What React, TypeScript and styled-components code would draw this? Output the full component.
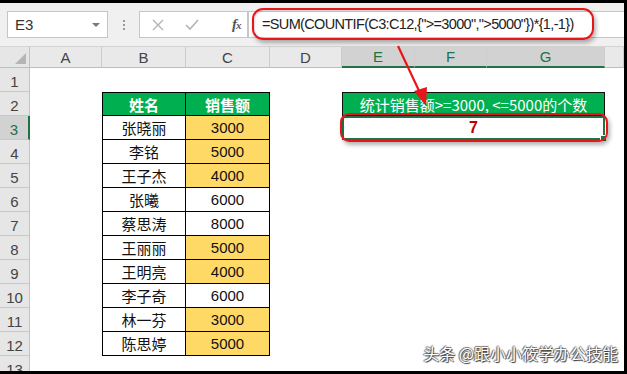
import React from 'react';
import styled, { createGlobalStyle } from 'styled-components';

const Global = createGlobalStyle`
  html, body { margin: 0; padding: 0; background: #fff; }
  body { font-family: "Liberation Sans", "Noto Sans CJK SC", sans-serif; }
`;

const Frame = styled.div`
  position: relative;
  width: 627px;
  height: 374px;
  box-sizing: border-box;
  border-top: 3px solid #000;
  border-right: 3px solid #000;
  border-bottom: 3px solid #000;
  background: #fff;
  display: flex;
  flex-direction: column;
  overflow: hidden;
`;

const Toolbar = styled.div`
  flex: none;
  height: 44px;
  box-sizing: border-box;
  background: #f0f0f0;
  border-bottom: 1px solid #d4d4d4;
  display: flex;
  align-items: flex-start;
  padding: 8px 0 0 7px;
`;

const NameBox = styled.div`
  width: 101px;
  height: 27px;
  box-sizing: border-box;
  background: #fff;
  border: 1px solid #c6c6c6;
  display: flex;
  align-items: center;
  justify-content: space-between;
  padding: 0 7px 0 7px;
  font-size: 15px;
  color: #333;
`;

const Caret = styled.span`
  width: 0;
  height: 0;
  border-left: 4px solid transparent;
  border-right: 4px solid transparent;
  border-top: 4px solid #7a7a7a;
`;

const Grip = styled.div`
  width: 31px;
  height: 27px;
  display: flex;
  flex-direction: column;
  align-items: center;
  justify-content: center;
  gap: 2px;
`;

const Dot = styled.span`
  width: 2px;
  height: 2px;
  background: #9a9a9a;
`;

const FxBox = styled.div`
  width: 109px;
  height: 27px;
  box-sizing: border-box;
  background: #fff;
  border: 1px solid #c6c6c6;
  display: flex;
  align-items: center;
  padding-left: 12px;
  gap: 21px;
`;

const Fx = styled.span`
  margin-left: 12px;
  font-family: "Liberation Serif", serif;
  font-style: italic;
  font-weight: bold;
  font-size: 15px;
  color: #555;
  letter-spacing: -1px;
  & small { font-size: 11px; }
`;

const Formula = styled.div`
  flex: 1;
  height: 27px;
  box-sizing: border-box;
  background: #fff;
  border: 1px solid #c6c6c6;
  border-right: none;
  padding-left: 13px;
  font-size: 14.5px;
  letter-spacing: -0.65px;
  line-height: 25px;
  color: #222;
  white-space: nowrap;
`;

const Sheet = styled.div`
  flex: 1;
  display: grid;
  grid-template-columns: 30px 72px 84px 84px 72px 73px 72px 118px 19px;
  grid-template-rows: 21px repeat(13, 24px);
  overflow: hidden;
`;

const Corner = styled.div`
  position: relative;
  background: #e6e6e6;
  border-right: 1px solid #c2c2c2;
  border-bottom: 1px solid #bdbdbd;
  box-sizing: border-box;
  &::after {
    content: "";
    position: absolute;
    right: 3px;
    bottom: 3px;
    border-left: 11px solid transparent;
    border-bottom: 11px solid #b5b5b5;
  }
`;

const ColHead = styled.div<{ $sel?: boolean }>`
  box-sizing: border-box;
  background: ${p => (p.$sel ? '#d2d2d2' : '#e9e9e9')};
  color: ${p => (p.$sel ? '#217346' : '#444')};
  border-right: 1px solid #cdcdcd;
  border-bottom: ${p => (p.$sel ? '2px solid #217346' : '1px solid #bdbdbd')};
  font-size: 15px;
  display: flex;
  align-items: center;
  justify-content: center;
`;

const RowHead = styled.div<{ $sel?: boolean }>`
  box-sizing: border-box;
  background: ${p => (p.$sel ? '#d2d2d2' : '#e6e6e6')};
  color: ${p => (p.$sel ? '#217346' : '#444')};
  border-right: ${p => (p.$sel ? '2px solid #217346' : '1px solid #c2c2c2')};
  border-bottom: 1px solid #c8c8c8;
  font-size: 15px;
  display: flex;
  align-items: flex-end;
  justify-content: center;
  padding-bottom: 1px;
`;

const Empty = styled.div``;

const TCell = styled.div<{ $head?: boolean; $fill?: boolean; $left?: boolean; $top?: boolean }>`
  box-sizing: border-box;
  background: ${p => (p.$head ? '#00b050' : p.$fill ? '#ffd966' : '#fff')};
  color: ${p => (p.$head ? '#fff' : '#111')};
  font-weight: ${p => (p.$head ? 'bold' : 'normal')};
  font-family: "Noto Sans CJK SC", "Liberation Sans", sans-serif;
  font-size: 15px;
  border-right: 1px solid #000;
  border-bottom: 1px solid #000;
  border-left: ${p => (p.$left ? '1px solid #000' : 'none')};
  border-top: ${p => (p.$top ? '1px solid #000' : 'none')};
  display: flex;
  align-items: center;
  justify-content: center;
  line-height: 1;
`;

const Num = styled.span`
  font-family: "Liberation Sans", sans-serif;
  font-size: 15px;
`;

const StatHead = styled.div`
  grid-column: span 3;
  box-sizing: border-box;
  background: #00b050;
  border: 1px solid #111;
  color: #fff;
  font-family: "Noto Sans CJK SC", sans-serif;
  font-size: 15px;
  display: flex;
  align-items: center;
  justify-content: center;
  line-height: 1;
`;

const Result = styled.div`
  position: relative;
  grid-column: span 3;
  box-sizing: border-box;
  background: #fff;
  border: 2px solid #217346;
  color: #c00000;
  font-weight: bold;
  font-size: 16px;
  display: flex;
  align-items: center;
  justify-content: center;
`;

const Handle = styled.span`
  position: absolute;
  right: -4px;
  bottom: -4px;
  width: 5px;
  height: 5px;
  background: #217346;
  border: 1px solid #fff;
`;

const Ring = styled.div<{ $r: number }>`
  position: absolute;
  box-sizing: border-box;
  border: 2px solid #e8161b;
  border-radius: ${p => p.$r}px;
  box-shadow: 2px 3px 4px rgba(0, 0, 0, 0.3), inset 1px 1px 2px rgba(0,0,0,0.15);
  pointer-events: none;
`;

const Overlay = styled.svg`
  position: absolute;
  left: 0;
  top: 0;
  pointer-events: none;
`;

const Watermark = styled.div`
  position: absolute;
  right: 6px;
  bottom: 6px;
  font-family: "Noto Sans CJK SC", sans-serif;
  font-size: 16px;
  color: #fff;
  text-shadow: 1px 1px 1px #333, -1px 0 1px #555, 0 -1px 1px #777;
  white-space: nowrap;
`;

const FORMULA = '=SUM(COUNTIF(C3:C12,{">=3000",">5000"})*{1,-1})';
const STAT = '统计销售额>=3000, <=5000的个数';

const rows: [string, string, boolean][] = [
  ['张晓丽', '3000', true],
  ['李铭', '5000', true],
  ['王子杰', '4000', true],
  ['张曦', '6000', false],
  ['蔡思涛', '8000', false],
  ['王丽丽', '5000', true],
  ['王明亮', '4000', true],
  ['李子奇', '6000', false],
  ['林一芬', '3000', true],
  ['陈思婷', '5000', true],
];

const cols = ['A', 'B', 'C', 'D', 'E', 'F', 'G'];

function SheetRow({ r }: { r: number }) {
  const data = r >= 3 && r <= 12 ? rows[r - 3] : null;
  return (
    <>
      <RowHead $sel={r === 3}>{r}</RowHead>
      <Empty />
      {r === 2 ? (
        <>
          <TCell $head $left $top>姓名</TCell>
          <TCell $head $top>销售额</TCell>
        </>
      ) : data ? (
        <>
          <TCell $left>{data[0]}</TCell>
          <TCell $fill={data[2]}><Num>{data[1]}</Num></TCell>
        </>
      ) : (
        <>
          <Empty />
          <Empty />
        </>
      )}
      <Empty />
      {r === 2 ? (
        <StatHead>{STAT}</StatHead>
      ) : r === 3 ? (
        <Result>7<Handle /></Result>
      ) : (
        <>
          <Empty />
          <Empty />
          <Empty />
        </>
      )}
      <Empty />
    </>
  );
}

export default function App() {
  return (
    <>
      <Global />
      <Frame>
        <Toolbar>
          <NameBox>
            E3
            <Caret />
          </NameBox>
          <Grip>
            <Dot />
            <Dot />
            <Dot />
          </Grip>
          <FxBox>
            <svg width="12" height="12" viewBox="0 0 12 12">
              <path d="M1 1 L11 11 M11 1 L1 11" stroke="#b4b4b4" strokeWidth="1.4" fill="none" />
            </svg>
            <svg width="14" height="12" viewBox="0 0 14 12">
              <path d="M1 6 L5 10 L13 1" stroke="#b4b4b4" strokeWidth="1.6" fill="none" />
            </svg>
            <Fx>f<small>x</small></Fx>
          </FxBox>
          <Formula>{FORMULA}</Formula>
        </Toolbar>
        <Sheet>
          <Corner />
          {cols.map(c => (
            <ColHead key={c} $sel={c === 'E' || c === 'F' || c === 'G'}>{c}</ColHead>
          ))}
          <ColHead />
          {Array.from({ length: 13 }, (_, i) => (
            <SheetRow key={i} r={i + 1} />
          ))}
        </Sheet>
        <Ring $r={11} style={{ left: 252, top: 5, width: 342, height: 32 }} />
        <Ring $r={9} style={{ left: 340, top: 110, width: 268, height: 29 }} />
        <Overlay width="624" height="368" viewBox="0 0 624 368">
          <line x1="398" y1="43" x2="421" y2="92" stroke="#e8161b" strokeWidth="2.2" />
          <polygon points="426,103 414,88 427,84" fill="#e8161b" />
        </Overlay>
        <Watermark>头条 @跟小小筱学办公技能</Watermark>
      </Frame>
    </>
  );
}
